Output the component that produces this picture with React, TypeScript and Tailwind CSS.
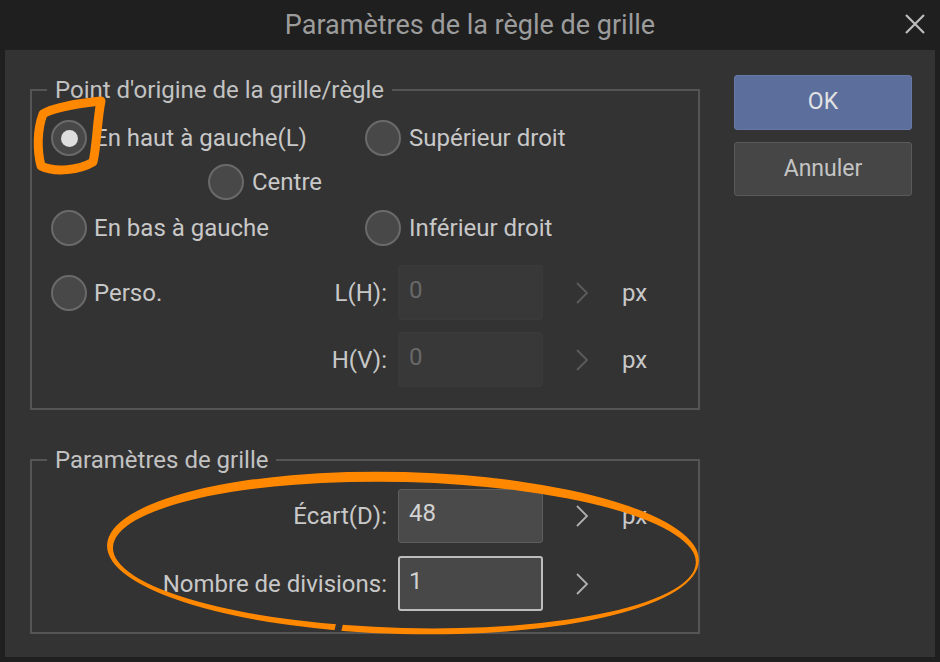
import React from "react";

function Radio({ checked }: { checked?: boolean }) {
  return (
    <span className="w-[36px] h-[36px] rounded-full bg-[#484848] border-2 border-[#6a6a6a] flex items-center justify-center shrink-0">
      {checked && <span className="w-[17px] h-[17px] rounded-full bg-[#dedede]" />}
    </span>
  );
}

function Chevron({ color }: { color: string }) {
  return (
    <svg width="14" height="22" viewBox="0 0 14 22" className="shrink-0">
      <polyline points="2,1 12,11 2,21" fill="none" stroke={color} strokeWidth="1.8" />
    </svg>
  );
}

function Annotations() {
  return (
    <svg
      className="absolute left-0 top-0 pointer-events-none"
      width="940"
      height="662"
      viewBox="0 0 940 662"
    >
      <defs>
        <mask id="gap">
          <rect x="0" y="0" width="940" height="662" fill="white" />
          <polygon points="340,615 347,615 341,645 334,645" fill="black" />
        </mask>
      </defs>
      <path
        d="M 101 101 C 85 103, 55 106, 43 114 C 37 130, 37 150, 41 166 C 55 173, 80 170, 93 162 C 97 145, 97 120, 101 101"
        fill="none"
        stroke="#ff8800"
        strokeWidth="9"
        strokeLinejoin="round"
        strokeLinecap="round"
      />
      <g mask="url(#gap)" transform="rotate(1.5 403 551)">
        <path
          fillRule="evenodd"
          fill="#ff8800"
          d="M 107 553 A 296 81 0 1 0 699 553 A 296 81 0 1 0 107 553 Z M 113 555 A 291.5 73 0 1 0 696 555 A 291.5 73 0 1 0 113 555 Z"
        />
      </g>
    </svg>
  );
}

export default function App() {
  const label = "text-[24px] text-[#c8c8c8] leading-none whitespace-nowrap";
  return (
    <div className="relative w-[940px] h-[662px] bg-[#1f1f1f] flex flex-col font-[Roboto,'Noto_Sans',sans-serif] overflow-hidden">
      {/* title bar */}
      <div className="relative h-[50px] flex items-center justify-center shrink-0">
        <span className="text-[27px] text-[#9c9c9c]">Paramètres de la règle de grille</span>
        <svg className="absolute right-[14px] top-[13px]" width="22" height="22" viewBox="0 0 22 22">
          <path d="M 2 2 L 20 20 M 20 2 L 2 20" stroke="#bdbdbd" strokeWidth="2.2" />
        </svg>
      </div>

      {/* body */}
      <div className="flex-1 mx-[5px] mb-[5px] bg-[#333333] flex pl-[25px] pt-[26px]">
        <div className="w-[670px] flex flex-col">
          {/* group 1 */}
          <fieldset className="border-2 border-[#555555] pb-[21px]">
            <legend className="ml-[15px] px-[8px] text-[24px] leading-[28px] text-[#c2c2c2]">
              Point d'origine de la grille/règle
            </legend>
            <div className="flex flex-col pl-[19px]">
              <div className="flex items-center h-[36px] mt-[16px]">
                <div className="w-[314px] flex items-center">
                  <Radio checked />
                  <span className={`${label} ml-[7px]`}>En haut à gauche(L)</span>
                </div>
                <div className="flex items-center">
                  <Radio />
                  <span className={`${label} ml-[8px]`}>Supérieur droit</span>
                </div>
              </div>
              <div className="flex items-center h-[36px] mt-[8px] pl-[157px]">
                <Radio />
                <span className={`${label} ml-[8px]`}>Centre</span>
              </div>
              <div className="flex items-center h-[36px] mt-[10px]">
                <div className="w-[314px] flex items-center">
                  <Radio />
                  <span className={`${label} ml-[7px]`}>En bas à gauche</span>
                </div>
                <div className="flex items-center">
                  <Radio />
                  <span className={`${label} ml-[8px]`}>Inférieur droit</span>
                </div>
              </div>
              <div className="flex items-center h-[55px] mt-[19px]">
                <div className="w-[336px] flex items-center justify-between">
                  <div className="flex items-center">
                    <Radio />
                    <span className={`${label} ml-[7px]`}>Perso.</span>
                  </div>
                  <span className={label}>L(H):</span>
                </div>
                <div className="ml-[11px] w-[145px] h-[55px] rounded-[3px] bg-[#383838] border border-[#3a3a3a] flex items-center pl-[10px] pb-[6px]">
                  <span className="text-[24px] text-[#686868] leading-none">0</span>
                </div>
                <div className="ml-[32px]">
                  <Chevron color="#5c5c5c" />
                </div>
                <span className={`${label} ml-[33px]`}>px</span>
              </div>
              <div className="flex items-center h-[55px] mt-[12px]">
                <div className="w-[336px] flex items-center justify-end">
                  <span className={label}>H(V):</span>
                </div>
                <div className="ml-[11px] w-[145px] h-[55px] rounded-[3px] bg-[#383838] border border-[#3a3a3a] flex items-center pl-[10px] pb-[6px]">
                  <span className="text-[24px] text-[#686868] leading-none">0</span>
                </div>
                <div className="ml-[32px]">
                  <Chevron color="#5c5c5c" />
                </div>
                <span className={`${label} ml-[33px]`}>px</span>
              </div>
            </div>
          </fieldset>

          {/* group 2 */}
          <fieldset className="mt-[36px] border-2 border-[#555555] pb-[21px]">
            <legend className="ml-[15px] px-[8px] text-[24px] leading-[28px] text-[#c2c2c2]">
              Paramètres de grille
            </legend>
            <div className="flex flex-col pl-[19px]">
              <div className="flex items-center h-[54px] mt-[15px]">
                <div className="w-[336px] flex items-center justify-end">
                  <span className={label}>Écart(D):</span>
                </div>
                <div className="ml-[11px] w-[145px] h-[54px] rounded-[3px] bg-[#4a4a4a] border border-[#5e5e5e] flex items-center pl-[10px] pb-[6px]">
                  <span className="text-[24px] text-[#d2d2d2] leading-none">48</span>
                </div>
                <div className="ml-[32px]">
                  <Chevron color="#b0b0b0" />
                </div>
                <span className={`${label} ml-[33px]`}>px</span>
              </div>
              <div className="flex items-center h-[55px] mt-[13px]">
                <div className="w-[336px] flex items-center justify-end">
                  <span className={label}>Nombre de divisions:</span>
                </div>
                <div className="ml-[11px] w-[145px] h-[55px] rounded-[3px] bg-[#484848] border-2 border-[#bdbdbd] flex items-center pl-[9px] pb-[6px]">
                  <span className="text-[24px] text-[#d2d2d2] leading-none">1</span>
                </div>
                <div className="ml-[32px]">
                  <Chevron color="#b0b0b0" />
                </div>
              </div>
            </div>
          </fieldset>
        </div>

        {/* buttons */}
        <div className="ml-[34px] mt-[-1px] flex flex-col gap-[12px] w-[178px]">
          <div className="h-[55px] rounded-[3px] bg-[#5b6e9c] border border-[#6679a6] flex items-center justify-center">
            <span className="text-[23px] text-[#e2e2e2]">OK</span>
          </div>
          <div className="h-[54px] rounded-[3px] bg-[#464646] border border-[#5a5a5a] flex items-center justify-center">
            <span className="text-[23px] text-[#c4c4c4]">Annuler</span>
          </div>
        </div>
      </div>

      <Annotations />
    </div>
  );
}
